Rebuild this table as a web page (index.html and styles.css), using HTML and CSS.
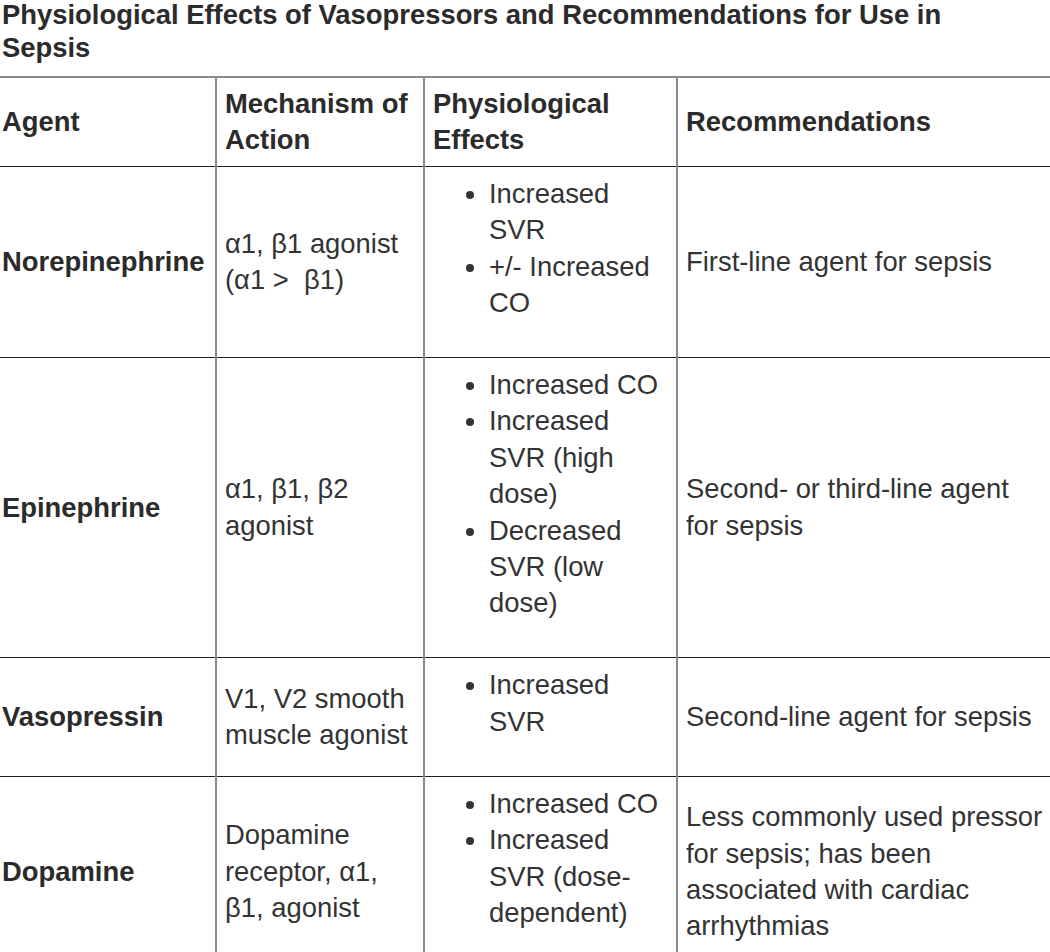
FILE: index.html
```html
<!DOCTYPE html>
<html lang="en">
<head>
<meta charset="utf-8">
<title>Physiological Effects of Vasopressors</title>
<link rel="stylesheet" href="styles.css">
</head>
<body>
<div class="page">
  <h2 class="title">Physiological Effects of Vasopressors and Recommendations for Use in Sepsis</h2>
  <table class="pressors">
    <colgroup>
      <col class="c-agent">
      <col class="c-mech">
      <col class="c-effects">
      <col class="c-rec">
    </colgroup>
    <thead>
      <tr>
        <th>Agent</th>
        <th>Mechanism of Action</th>
        <th>Physiological Effects</th>
        <th>Recommendations</th>
      </tr>
    </thead>
    <tbody>
      <tr>
        <th>Norepinephrine</th>
        <td>α1, β1 agonist (α1 &gt;&nbsp; β1)</td>
        <td class="fx">
          <ul>
            <li>Increased SVR</li>
            <li>+/- Increased CO</li>
          </ul>
        </td>
        <td>First-line agent for sepsis</td>
      </tr>
      <tr>
        <th>Epinephrine</th>
        <td>α1, β1, β2 agonist</td>
        <td class="fx">
          <ul>
            <li>Increased CO</li>
            <li>Increased SVR (high dose)</li>
            <li>Decreased SVR (low dose)</li>
          </ul>
        </td>
        <td>Second- or third-line agent for sepsis</td>
      </tr>
      <tr>
        <th>Vasopressin</th>
        <td>V1, V2 smooth muscle agonist</td>
        <td class="fx">
          <ul>
            <li>Increased SVR</li>
          </ul>
        </td>
        <td>Second-line agent for sepsis</td>
      </tr>
      <tr>
        <th>Dopamine</th>
        <td>Dopamine receptor, α1, β1, agonist</td>
        <td class="fx">
          <ul>
            <li>Increased CO</li>
            <li>Increased SVR (dose-dependent)</li>
          </ul>
        </td>
        <td>Less commonly used pressor for sepsis; has been associated with cardiac arrhythmias</td>
      </tr>
    </tbody>
  </table>
</div>
</body>
</html>
```

FILE: styles.css
```css
html, body {
  margin: 0;
  padding: 0;
  background: #ffffff;
  overflow: hidden;
}

.page {
  font-family: "Liberation Sans", Arial, sans-serif;
  font-size: 27.4px;
  color: #333333;
}

.title {
  margin: -2px 0 12px 2px;
  font-size: 27.4px;
  line-height: 33px;
  font-weight: 700;
  color: #2b2b2b;
  width: 1000px;
}

.pressors {
  border-collapse: collapse;
  table-layout: fixed;
  width: 1054px;
  line-height: 36.4px;
  border-top: 2px solid #8a8a8a;
}

.c-agent { width: 216px; }
.c-mech { width: 208px; }
.c-effects { width: 253px; }
.c-rec { width: 377px; }

.pressors th,
.pressors td {
  padding: 9px 8px;
  vertical-align: middle;
  text-align: left;
  border-left: 2px solid #8a8a8a;
  border-bottom: 1px solid #1e1e1e;
}

.pressors thead th {
  padding-top: 7.5px;
  padding-bottom: 7.5px;
}

.pressors th {
  font-weight: 700;
  color: #2b2b2b;
}

.pressors td {
  font-weight: 400;
}

.pressors tr > :first-child {
  border-left: none;
  padding-left: 2px;
}

.pressors td.fx {
  vertical-align: top;
}

.fx ul {
  margin: 0 0 26.6px;
  padding-left: 56px;
}
```
